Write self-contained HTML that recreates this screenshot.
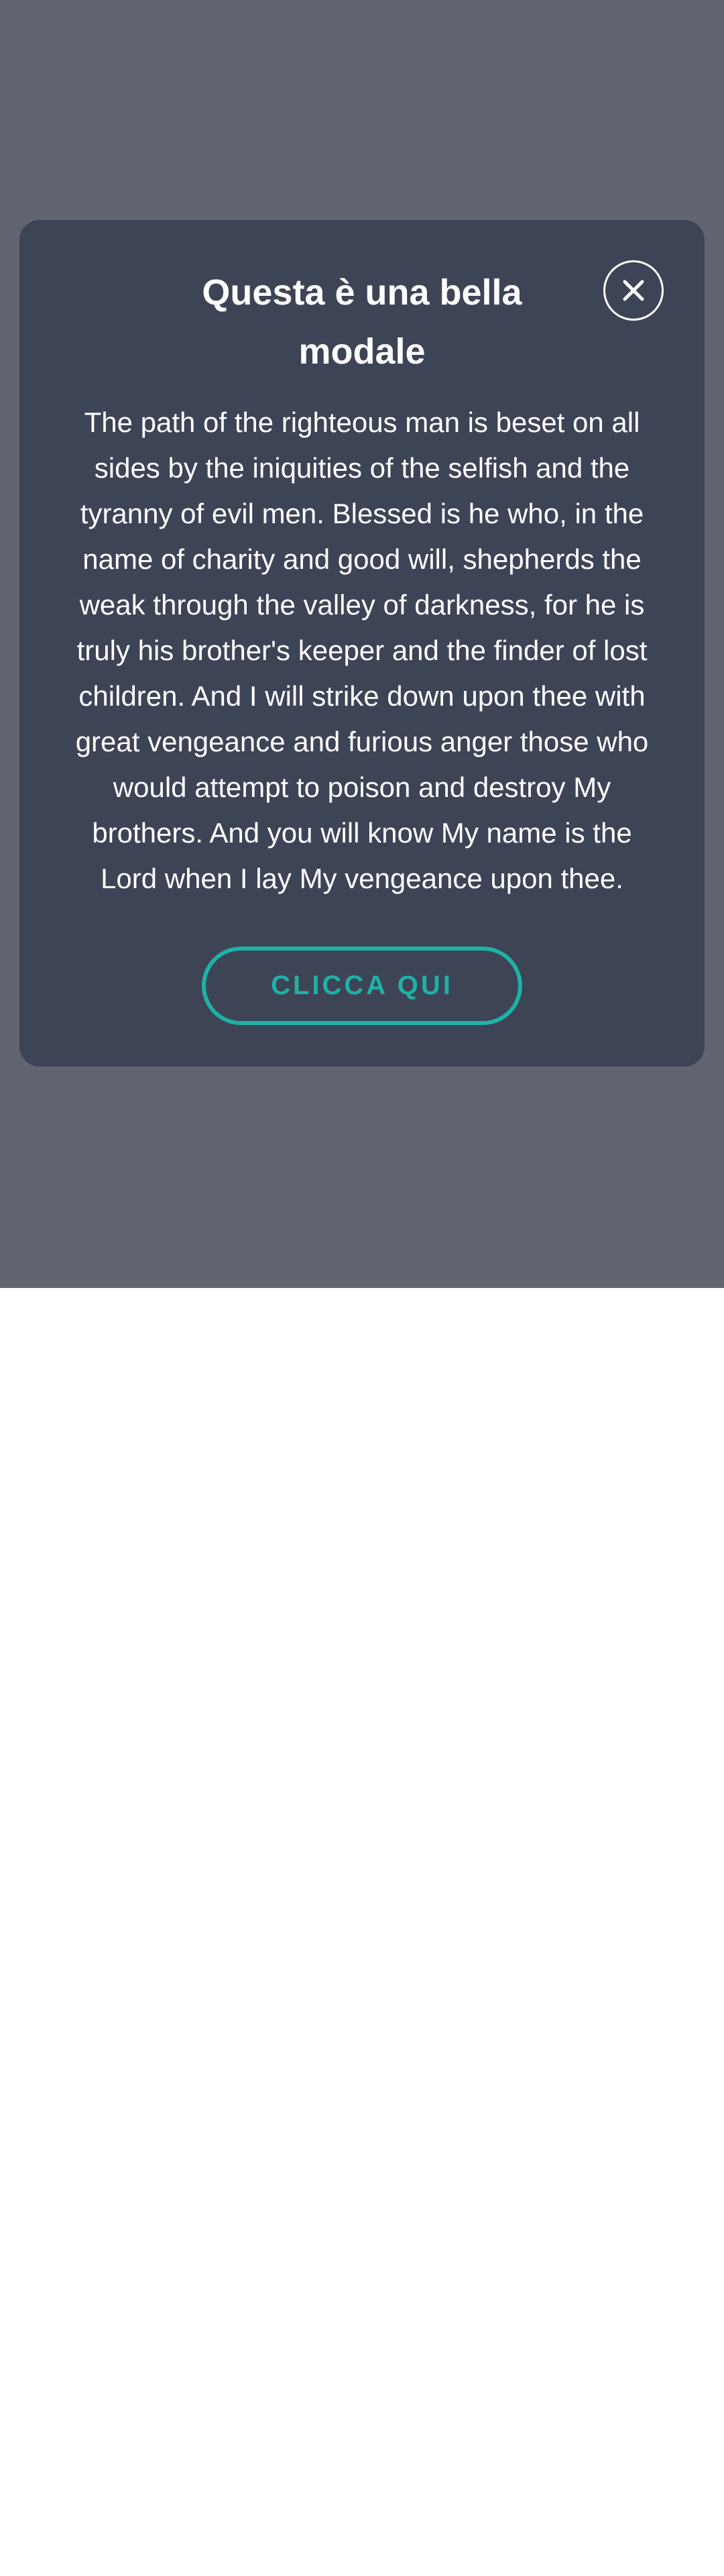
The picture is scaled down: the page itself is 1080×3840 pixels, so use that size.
<!DOCTYPE html>
<html><head><meta charset="utf-8"><style>
html,body{margin:0;padding:0;width:1080px;height:3840px;background:#fff;overflow:hidden}
.ov{position:absolute;left:0;top:0;width:1080px;height:1920px;background:#62646f}
.m{position:absolute;left:29px;top:328px;width:1022px;height:1262px;background:#3d4456;border-radius:30px}
.t{position:absolute;left:0;width:1080px;text-align:center;color:#fff;font-family:"Liberation Sans",sans-serif;font-weight:bold;font-size:54px;line-height:88px;top:392px}
.x{position:absolute;left:900px;top:388px;width:90px;height:90px;border:3px solid #fff;border-radius:50%;box-sizing:border-box}
.b{position:absolute;left:0;width:1080px;top:596px;text-align:center;color:#fff;font-family:"Liberation Sans",sans-serif;font-size:42px;line-height:68px;white-space:nowrap}
.btn{position:absolute;left:301px;top:1411px;width:478px;height:117px;border:6px solid #1fb1a6;border-radius:60px;box-sizing:border-box;color:#1fb1a6;font-family:"Liberation Sans",sans-serif;font-weight:bold;font-size:40px;letter-spacing:4px;text-align:center;line-height:105px}
</style></head><body>
<div class="ov"></div>
<div class="m"></div>
<div class="t">Questa è una bella<br>modale</div>
<div class="x"><svg width="84" height="84" viewBox="0 0 84 84" style="position:absolute;left:0;top:0"><path d="M29 29L55 55M55 29L29 55" stroke="#fff" stroke-width="5" stroke-linecap="round"/></svg></div>
<div class="b">The path of the righteous man is beset on all<br>sides by the iniquities of the selfish and the<br>tyranny of evil men. Blessed is he who, in the<br>name of charity and good will, shepherds the<br>weak through the valley of darkness, for he is<br>truly his brother's keeper and the finder of lost<br>children. And I will strike down upon thee with<br>great vengeance and furious anger those who<br>would attempt to poison and destroy My<br>brothers. And you will know My name is the<br>Lord when I lay My vengeance upon thee.</div>
<div class="btn">CLICCA QUI</div>
</body></html>
